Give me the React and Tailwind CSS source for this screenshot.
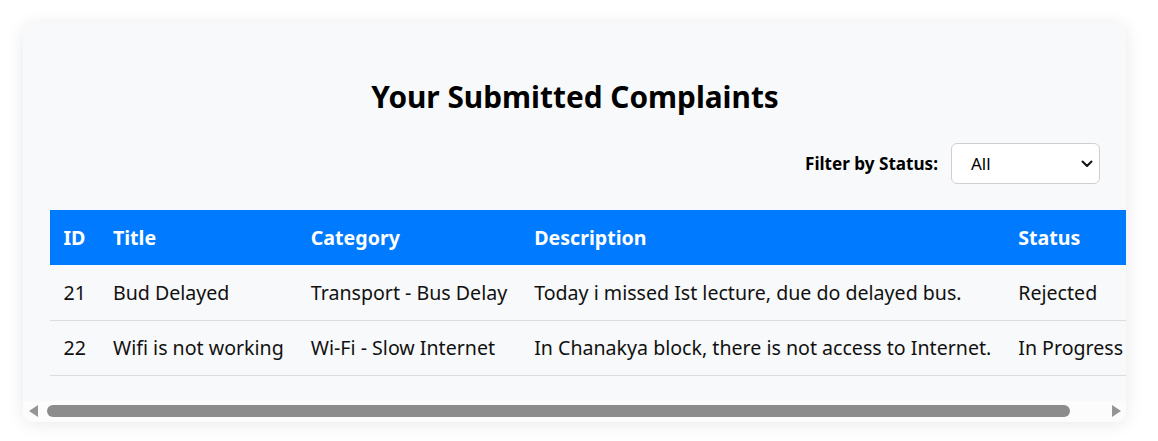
const complaints = [
  {
    id: 21,
    title: "Bud Delayed",
    category: "Transport - Bus Delay",
    description: "Today i missed Ist lecture, due do delayed bus.",
    status: "Rejected",
  },
  {
    id: 22,
    title: "Wifi is not working",
    category: "Wi-Fi - Slow Internet",
    description: "In Chanakya block, there is not access to Internet.",
    status: "In Progress",
  },
];

const headers = ["ID", "Title", "Category", "Description", "Status"];

function ScrollBar() {
  return (
    <div className="flex h-[21px] items-center bg-[#fcfcfc]" aria-hidden="true">
      <div className="flex h-full w-[20px] items-center justify-center pl-[1px]">
        <svg width="9" height="12" viewBox="0 0 9 12">
          <path d="M0 6 9 0v12z" fill="#959595" />
        </svg>
      </div>
      <div className="flex-1 px-[4px]">
        <div className="h-[12px] w-[1023px] rounded-full bg-[#8c8c8c]" />
      </div>
      <div className="flex h-full w-[20px] items-center justify-center">
        <svg width="9" height="12" viewBox="0 0 9 12">
          <path d="M9 6 0 0v12z" fill="#959595" />
        </svg>
      </div>
    </div>
  );
}

export default function App() {
  return (
    <div
      className="min-h-[441px] bg-white pl-[23px] pt-[23px]"
      style={{ fontFamily: '"Noto Sans", "Open Sans", sans-serif' }}
    >
      <div className="w-[1103px] overflow-hidden rounded-[10px] bg-[#f8f9fa] shadow-[0_2px_18px_rgba(0,0,0,0.09)]">
        <div className="overflow-hidden pb-[25px] pl-[27px] pr-[26px] pt-[27px]">
          <h2 className="mt-[27px] text-center text-[29.8px] font-bold leading-[40px] text-black">
            Your Submitted Complaints
          </h2>

          <div className="mt-[26px] flex items-center justify-end gap-[13px]">
            <label className="text-[17.1px] font-bold text-black">Filter by Status:</label>
            <div className="relative h-[41px] w-[149px] rounded-[6px] border border-[#cfcfcf] bg-white">
              <span className="absolute left-[19px] top-1/2 -translate-y-1/2 text-[17px] text-black">
                All
              </span>
              <svg
                className="absolute right-[6px] top-1/2 -translate-y-1/2"
                width="12"
                height="8"
                viewBox="0 0 12 8"
                fill="none"
              >
                <path d="M1.5 1.5 6 6l4.5-4.5" stroke="#111" strokeWidth="2" strokeLinecap="round" strokeLinejoin="round" />
              </svg>
            </div>
          </div>

          <table className="mt-[26px] border-collapse whitespace-nowrap text-left text-[19.6px]">
            <thead>
              <tr className="bg-[#007bff] text-white">
                {headers.map((h) => (
                  <th key={h} className="h-[55px] px-[13.5px] font-bold">
                    {h}
                  </th>
                ))}
              </tr>
            </thead>
            <tbody className="text-[#111]">
              {complaints.map((c) => (
                <tr key={c.id} className="border-b border-[#dcdcdc]">
                  <td className="h-[55px] px-[13.5px]">{c.id}</td>
                  <td className="px-[13.5px]">{c.title}</td>
                  <td className="px-[13.5px]">{c.category}</td>
                  <td className="px-[13.5px]">{c.description}</td>
                  <td className="px-[13.5px]">{c.status}</td>
                </tr>
              ))}
            </tbody>
          </table>
        </div>
        <ScrollBar />
      </div>
    </div>
  );
}
